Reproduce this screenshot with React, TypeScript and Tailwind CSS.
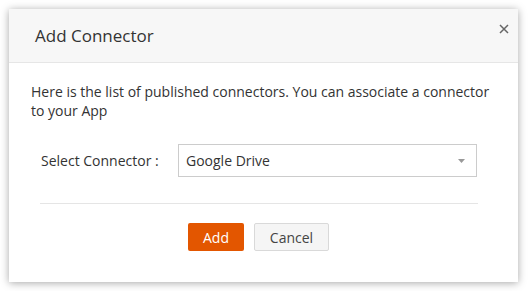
import React from "react";

const App = () => {
  return (
    <div
      className="w-[528px] h-[291px] bg-white pt-[9px] pl-[9px]"
      style={{ fontFamily: "'Open Sans', 'Liberation Sans', sans-serif" }}
    >
      <div className="relative w-[509px] h-[273px] bg-white shadow-[0_1px_8px_rgba(0,0,0,0.35)] flex flex-col">
        {/* header */}
        <div className="h-[54px] bg-[#f7f7f7] border-b border-[#e6e6e6] flex items-center pl-[26px]">
          <span className="text-[17px] text-[#333] leading-none">Add Connector</span>
        </div>
        <button className="absolute top-[15px] right-[9px] w-[10px] h-[10px] flex items-center justify-center" aria-label="close">
          <svg width="10" height="10" viewBox="0 0 10 10">
            <path d="M1 1 L9 9 M9 1 L1 9" stroke="#666" strokeWidth="1.5" />
          </svg>
        </button>

        {/* body */}
        <div className="pl-[22px] pr-[20px] pt-[19px] text-[14px] leading-[19px] text-[#333]">
          Here is the list of published connectors. You can associate a connector to your App
        </div>

        <div className="flex items-center mt-[24px] pl-[32px]">
          <label className="text-[14px] text-[#333] w-[137px]">Select Connector :</label>
          <div className="w-[299px] h-[33px] border border-[#ccc] flex items-center justify-between pl-[7px] pr-[11px]">
            <span className="text-[14px] text-[#333]">Google Drive</span>
            <svg width="7" height="4" viewBox="0 0 7 4">
              <path d="M0 0 L7 0 L3.5 4 Z" fill="#999" />
            </svg>
          </div>
        </div>

        <div className="ml-[31px] w-[438px] border-t border-[#e5e5e5] mt-[26px]" />

        <div className="flex gap-[10px] mt-[19px] pl-[179px]">
          <button className="w-[56px] h-[28px] bg-[#e35600] rounded-[2px] text-white text-[14px]">
            Add
          </button>
          <button className="w-[75px] h-[28px] bg-[#f5f5f5] border border-[#d9d9d9] rounded-[2px] text-[#444] text-[14px]">
            Cancel
          </button>
        </div>
      </div>
    </div>
  );
};

export default App;
